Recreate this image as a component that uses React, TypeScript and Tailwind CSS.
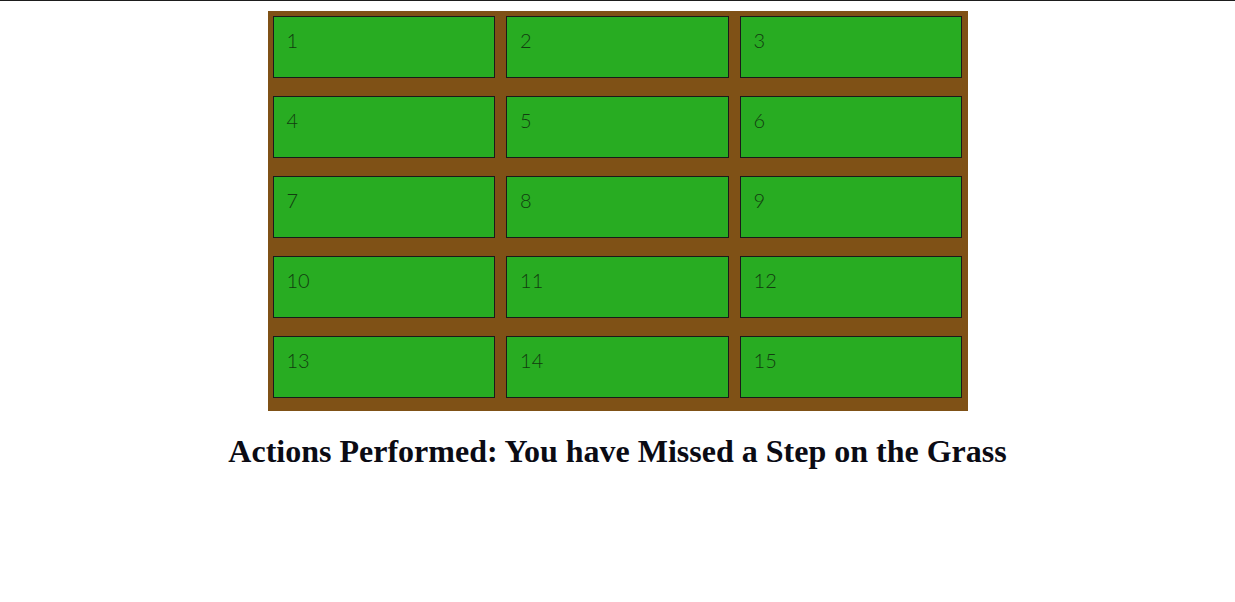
const cells = Array.from({ length: 15 }, (_, i) => i + 1)

export default function App() {
	return (
		<div className="min-h-[602px] border-t border-[#1d1d1d] bg-white">
			<div className="mx-auto mt-[10px] grid h-[400px] w-[700px] grid-cols-3 content-start gap-x-[10.66px] gap-y-[18px] bg-[#7f5116] px-[5px] pt-[5px]">
				{cells.map((n) => (
					<div
						key={n}
						className="h-[62px] border border-[#1a1a1a] bg-[#28ac22] pl-[13px] pt-[10px] font-['Lato','Open_Sans',sans-serif] text-[20px] leading-[26px] font-light text-[#123d10]"
					>
						{n}
					</div>
				))}
			</div>
			<h2 className="mt-[20px] text-center font-['Liberation_Serif',serif] text-[32px] leading-[40px] font-bold text-[#0b0b14]">
				Actions Performed: You have Missed a Step on the Grass
			</h2>
		</div>
	)
}
